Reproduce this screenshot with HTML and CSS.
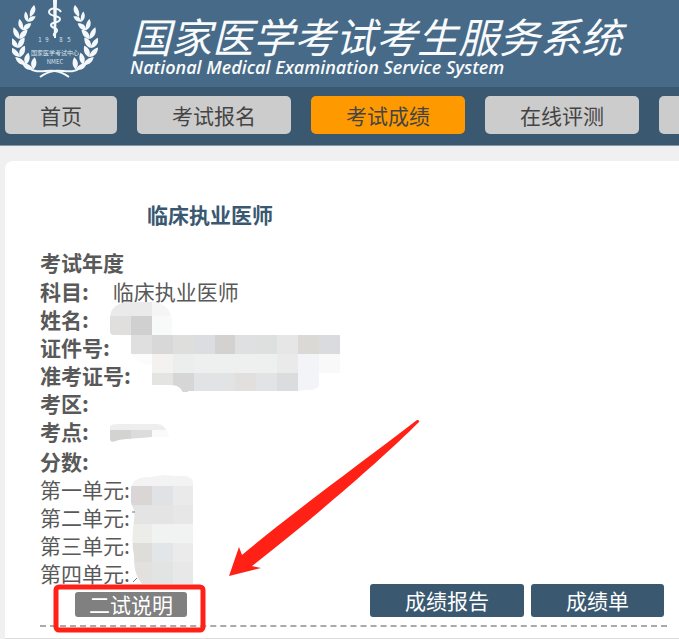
FILE: index.html
```html
<!DOCTYPE html>
<html lang="zh-CN">
<head>
    <meta charset="UTF-8">
    <meta name="viewport" content="width=device-width, initial-scale=1.0">
    <title>国家医学考试考生服务系统</title>
    <link rel="stylesheet" href="styles.css">
</head>
<body>
    <div class="page">
        <header class="header">
            <svg class="logo" viewBox="0 0 86 80" aria-hidden="true">
                <defs>
                    <g id="leaf">
                        <path d="M0 5C-5 4-8 0-7-6C-3-4 0 0 0 5Z"/>
                        <path d="M0 5C-1-1 2-4 7-5C7 1 4 4 0 5Z"/>
                    </g>
                    <g id="branch">
                        <path d="M22 5C25 9 23 14 18 17C17 12 19 8 22 5Z"/>
                        <use href="#leaf" transform="translate(17 18) rotate(22) scale(.8)"/>
                        <use href="#leaf" transform="translate(12 26) rotate(16) scale(.9)"/>
                        <use href="#leaf" transform="translate(8 34) rotate(6)"/>
                        <use href="#leaf" transform="translate(6 43) rotate(-4)"/>
                        <use href="#leaf" transform="translate(7 52) rotate(-12)"/>
                        <use href="#leaf" transform="translate(12 60) rotate(-22)"/>
                        <use href="#leaf" transform="translate(19 65) rotate(-28)"/>
                        <path d="M17 68C24 74 34 70 43 71C49 72 53 74 57 77" fill="none" stroke="#f4f8fb" stroke-width="2"/>
                    </g>
                </defs>
                <g fill="#f4f8fb">
                    <use href="#branch"/>
                    <use href="#branch" transform="matrix(-1 0 0 1 85 0)"/>
                    <path d="M41 0h4l-1 38h-2z"/>
                </g>
                <path d="M49 12C47 8 37 7 37 12C37 17 48 15 48 19C48 24 39 21 39 25C39 29 46 27 45 31C44 34 41 32 42 36" fill="none" stroke="#f4f8fb" stroke-width="2"/>
                <g fill="#dbe6ee" text-anchor="middle">
                    <text x="28" y="42" font-size="6">1</text>
                    <text x="35" y="42" font-size="6">9</text>
                    <text x="49" y="42" font-size="6">8</text>
                    <text x="57" y="42" font-size="6">5</text>
                    <text x="43" y="55" font-size="6">国家医学考试中心</text>
                    <text x="43" y="64" font-size="6">NMEC</text>
                </g>
            </svg>
            <div class="site-name">
                <h1>国家医学考试考生服务系统</h1>
                <p>National Medical Examination Service System</p>
            </div>
        </header>

        <nav class="nav">
            <a href="#" class="nav-item nav-home">首页</a>
            <a href="#" class="nav-item">考试报名</a>
            <a href="#" class="nav-item active">考试成绩</a>
            <a href="#" class="nav-item">在线评测</a>
            <a href="#" class="nav-item" aria-label="更多"></a>
        </nav>

        <main class="card">
            <h2>临床执业医师</h2>
            <h3>考试年度</h3>
            <dl class="fields">
                <div><dt>科目:</dt><dd>临床执业医师</dd></div>
                <div><dt>姓名:</dt><dd></dd></div>
                <div><dt>证件号:</dt><dd></dd></div>
                <div><dt>准考证号:</dt><dd></dd></div>
                <div><dt>考区:</dt><dd></dd></div>
                <div><dt>考点:</dt><dd></dd></div>
            </dl>
            <div class="result">
                <div class="scores">
                    <h3>分数:</h3>
                    <ul>
                        <li>第一单元:</li>
                        <li>第二单元:</li>
                        <li>第三单元:</li>
                        <li>第四单元:</li>
                    </ul>
                    <button type="button" class="note-button">二试说明</button>
                </div>
                <div class="actions">
                    <button type="button">成绩报告</button>
                    <button type="button">成绩单</button>
                </div>
            </div>
        </main>

        <!-- masked personal data, callout box and arrow -->
        <svg class="overlay" width="679" height="639" viewBox="0 0 679 639" aria-hidden="true">
            <defs>
                <clipPath id="name-mask"><path d="M110 318C110 308 118 302 130 302H152C164 302 172 310 172 322V335H114Q110 335 110 331Z"/></clipPath>
                <clipPath id="id-mask"><path d="M131 335H340V373H319V384Q319 390 308 390L296 391H188V396H184C182 388 178 385 170 385H152V365C142 365 134 360 131 353Z"/></clipPath>
                <clipPath id="place-mask"><path d="M110 426Q112 424 118 424H156Q166 424 169 437L152 437C138 439 122 438 116 441Q110 443 110 439Z"/></clipPath>
                <clipPath id="score-mask"><path d="M131 488C132 480 140 477 150 477L164 475L176 476Q194 474 193 484V584H142C136 576 134 570 134 555C132 545 132 535 134 520C136 508 130 505 131 500Z"/></clipPath>
            </defs>
            <g clip-path="url(#name-mask)">
                <path fill="#e9eae9" d="M110 302h42v14h-42z"/>
                <path fill="#f4f5f4" d="M152 302h20v14h-20z"/>
                <path fill="#e0dfde" d="M110 316h21v19h-21z"/>
                <path fill="#d0d0d0" d="M131 316h21v19h-21z"/>
                <path fill="#f8f9f9" d="M152 316h20v19h-20z"/>
            </g>
            <g clip-path="url(#id-mask)">
                <path fill="#dfdfdf" d="M131 335h21v19h-21z"/>
                <path fill="#d8d8d8" d="M152 335h21v19h-21z"/>
                <path fill="#dededc" d="M173 335h21v19h-21z"/>
                <path fill="#dbdde0" d="M194 335h21v19h-21z"/>
                <path fill="#d4d2d0" d="M215 335h20v19h-20z"/>
                <path fill="#dee0e1" d="M235 335h21v19h-21z"/>
                <path fill="#dedfdf" d="M256 335h21v19h-21z"/>
                <path fill="#e6e6e6" d="M277 335h21v19h-21z"/>
                <path fill="#dbd9d6" d="M298 335h21v19h-21z"/>
                <path fill="#dadbdf" d="M319 335h21v19h-21z"/>
                <path fill="#fcfcfc" d="M131 354h21v19h-21z"/>
                <path fill="#f4f2f0" d="M152 354h21v19h-21z"/>
                <path fill="#ebeeed" d="M173 354h21v19h-21z"/>
                <path fill="#eeefef" d="M194 354h104v19h-104z"/>
                <path fill="#eaeaea" d="M277 354h21v19h-21z"/>
                <path fill="#f2f4f7" d="M298 354h21v38h-21z"/>
                <path fill="#f9f9f9" d="M319 354h21v19h-21z"/>
                <path fill="#e4e4e3" d="M152 373h21v19h-21z"/>
                <path fill="#d6d6d6" d="M173 373h21v19h-21z"/>
                <path fill="#e2e3e4" d="M194 373h83v19h-83z"/>
                <path fill="#e2e0de" d="M235 373h21v19h-21z"/>
                <path fill="#dbdcdd" d="M277 373h21v19h-21z"/>
            </g>
            <g clip-path="url(#place-mask)">
                <path fill="#eeeeee" d="M110 424h60v6h-60z"/>
                <path fill="#d3d3d1" d="M110 430h21v13h-21z"/>
                <path fill="#dcdcdc" d="M131 430h21v13h-21z"/>
                <path fill="#f9fafa" d="M152 430h18v13h-18z"/>
            </g>
            <g clip-path="url(#score-mask)">
                <path fill="#f3f3f3" d="M130 474h64v12h-64z"/>
                <path fill="#d9d6d5" d="M130 486h22v19h-22z"/>
                <path fill="#e0e2e5" d="M152 486h21v19h-21z"/>
                <path fill="#eaeaeb" d="M173 486h21v19h-21z"/>
                <path fill="#e4e4e5" d="M130 505h43v19h-43z"/>
                <path fill="#e8e7e8" d="M173 505h21v19h-21z"/>
                <path fill="#ecece9" d="M130 524h22v19h-22z"/>
                <path fill="#f1f3f3" d="M152 524h42v19h-42z"/>
                <path fill="#dfddda" d="M130 543h22v19h-22z"/>
                <path fill="#e3e6e8" d="M152 543h21v19h-21z"/>
                <path fill="#ebebec" d="M173 543h21v19h-21z"/>
                <path fill="#e2e1e0" d="M130 562h22v22h-22z"/>
                <path fill="#e2e4e4" d="M152 562h21v22h-21z"/>
                <path fill="#e8e8e8" d="M173 562h21v22h-21z"/>
            </g>
            <path d="M132 512h3M133 582l4-4" fill="none" stroke="#777777"/>
            <rect x="56" y="587" width="147" height="43" rx="3" fill="none" stroke="#ff2116" stroke-width="5"/>
            <path fill="#ff2116" d="M417 420Q420 420 419 422C380 461 310 521 252 566L261 568L229 576L239 547L242 555C292 513 365 460 417 420Z"/>
        </svg>
    </div>
</body>
</html>
```

FILE: styles.css
```css
* {
    box-sizing: border-box;
}

body {
    margin: 0;
    background: #f0f0f0;
    color: #595959;
    font-family: "Noto Sans CJK SC", sans-serif;
    font-size: 21px;
    line-height: 28px;
}

h1, h2, h3, p, dl, dd, ul {
    margin: 0;
    padding: 0;
}

.page {
    position: relative;
    overflow: hidden;
}

.header {
    display: flex;
    align-items: flex-start;
    gap: 32px;
    height: 87px;
    padding-left: 12px;
    background: #466a87;
    color: #f8fafc;
}

.logo {
    flex: none;
    width: 86px;
    height: 80px;
}

.site-name {
    padding-top: 15px;
    white-space: nowrap;
}

.site-name h1 {
    font-size: 41px;
    font-weight: 400;
    font-style: italic;
    line-height: 40px;
}

.site-name p {
    font-family: "Open Sans", sans-serif;
    font-size: 18px;
    font-weight: 600;
    font-style: italic;
    line-height: 24px;
}

.nav {
    display: flex;
    gap: 20px;
    padding: 9px 0 11px 5px;
    background: #3a5971;
    border-bottom: 1px solid #8598a6;
}

.nav-item {
    flex: none;
    width: 154px;
    border-radius: 5px;
    background: #cccccc;
    color: #444444;
    line-height: 38px;
    height: 38px;
    text-align: center;
    text-decoration: none;
}

.nav-home {
    width: 112px;
}

.nav-item.active {
    background: #ff9900;
}

.card {
    margin: 15px 0 0 5px;
    padding: 39px 12px 11px 35px;
    background: #ffffff;
    border-bottom: 1px solid #dddddd;
    border-top-left-radius: 8px;
}

.card h2 {
    margin-bottom: 20px;
    padding-left: 107px;
    color: #3a5971;
    font-size: 21px;
}

.card h3 {
    font-size: 21px;
}

.fields {
    margin: 1px 0 2px;
}

.fields div {
    display: flex;
    gap: 24px;
}

.fields dt {
    font-weight: bold;
}

.result {
    display: flex;
    justify-content: space-between;
    align-items: flex-end;
    padding-bottom: 8px;
    border-bottom: 2px dashed #aaaaaa;
}

.scores ul {
    list-style: none;
}

button {
    display: block;
    border: none;
    border-radius: 3px;
    color: #ffffff;
    font-family: inherit;
    font-size: 21px;
    cursor: pointer;
}

.note-button {
    margin: 5px 0 0 35px;
    padding: 0 14px;
    background: #808080;
    line-height: 25px;
}

.actions {
    display: flex;
    gap: 7px;
    padding-right: 3px;
}

.actions button {
    padding: 0 35px;
    background: #3a5971;
    line-height: 33px;
}

.overlay {
    position: absolute;
    top: 0;
    left: 0;
    pointer-events: none;
}
```
